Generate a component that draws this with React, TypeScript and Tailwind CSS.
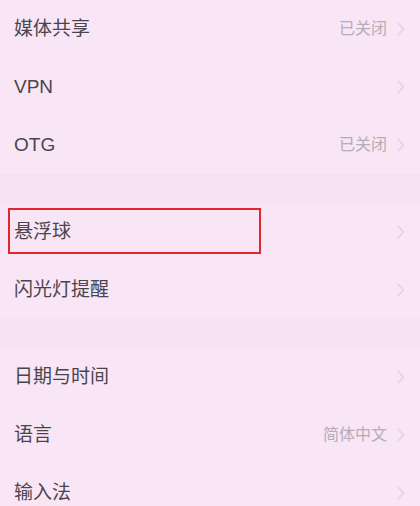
import React from "react";

type Item = { label: string; value?: string; boxed?: boolean };

const groups: Item[][] = [
  [{ label: "媒体共享", value: "已关闭" }, { label: "VPN" }, { label: "OTG", value: "已关闭" }],
  [{ label: "悬浮球", boxed: true }, { label: "闪光灯提醒" }],
  [{ label: "日期与时间" }, { label: "语言", value: "简体中文" }, { label: "输入法" }],
];

function Chevron() {
  return (
    <svg width="8" height="14" viewBox="0 0 8 14" fill="none" className="shrink-0">
      <path d="M1.5 1.5 L6.5 7 L1.5 12.5" stroke="#e1d1de" strokeWidth="1.4" strokeLinecap="round" strokeLinejoin="round" />
    </svg>
  );
}

function Row({ item }: { item: Item }) {
  return (
    <div className="relative flex h-[58px] items-center justify-between pl-[14px] pr-[15px]">
      <span className="text-[19px] text-[#4a454c]">{item.label}</span>
      <div className="flex items-center gap-[10px]">
        {item.value && <span className="text-[16px] text-[#b6acb5]">{item.value}</span>}
        <Chevron />
      </div>
      {item.boxed && (
        <div className="absolute left-[8px] top-[5px] h-[46px] w-[253px] border-2 border-[#e3262c]" />
      )}
    </div>
  );
}

export default function App() {
  return (
    <div
      className="h-[506px] w-[420px] overflow-hidden bg-[#f8e5f6]"
      style={{ fontFamily: '"Liberation Sans", "Noto Sans CJK SC", sans-serif' }}
    >
      {groups.map((g, i) => (
        <div key={i}>
          {i > 0 && <div className="h-[29px] bg-[#f4e1f2]" />}
          {g.map((item) => (
            <Row key={item.label} item={item} />
          ))}
        </div>
      ))}
    </div>
  );
}
